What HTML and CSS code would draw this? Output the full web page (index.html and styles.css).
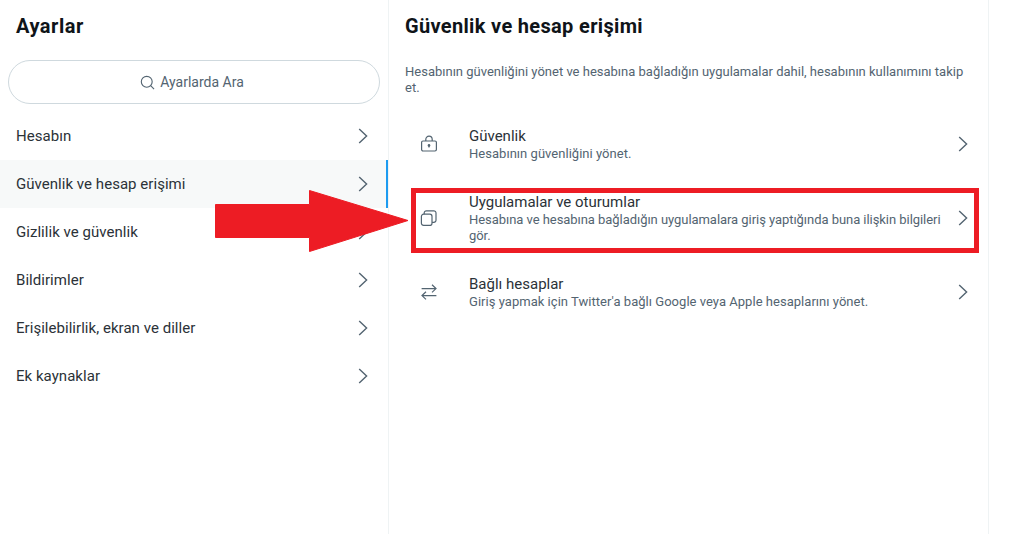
FILE: index.html
```html
<!DOCTYPE html>
<html lang="tr">
<head>
<meta charset="utf-8">
<title>Ayarlar</title>
<link rel="stylesheet" href="styles.css">
</head>
<body>
<div class="layout">
  <aside class="sidebar">
    <h1 class="page-title">Ayarlar</h1>
    <div class="search">
      <svg class="search-icon" viewBox="0 0 16 16"><circle cx="7.2" cy="7.2" r="5.8"/><path d="M11.4 11.4 15 15"/></svg>
      <span>Ayarlarda Ara</span>
    </div>
    <nav class="nav">
      <div class="nav-item"><span>Hesabın</span><svg class="chev" viewBox="0 0 10 16"><path d="M1.2 1 8.6 8 1.2 15"/></svg></div>
      <div class="nav-item active"><span>Güvenlik ve hesap erişimi</span><svg class="chev" viewBox="0 0 10 16"><path d="M1.2 1 8.6 8 1.2 15"/></svg></div>
      <div class="nav-item"><span>Gizlilik ve güvenlik</span><svg class="chev" viewBox="0 0 10 16"><path d="M1.2 1 8.6 8 1.2 15"/></svg></div>
      <div class="nav-item"><span>Bildirimler</span><svg class="chev" viewBox="0 0 10 16"><path d="M1.2 1 8.6 8 1.2 15"/></svg></div>
      <div class="nav-item"><span>Erişilebilirlik, ekran ve diller</span><svg class="chev" viewBox="0 0 10 16"><path d="M1.2 1 8.6 8 1.2 15"/></svg></div>
      <div class="nav-item"><span>Ek kaynaklar</span><svg class="chev" viewBox="0 0 10 16"><path d="M1.2 1 8.6 8 1.2 15"/></svg></div>
    </nav>
  </aside>
  <main class="content">
    <h2 class="content-title">Güvenlik ve hesap erişimi</h2>
    <p class="intro">Hesabının güvenliğini yönet ve hesabına bağladığın uygulamalar dahil, hesabının kullanımını takip et.</p>
    <div class="row">
      <svg class="row-icon" viewBox="0 0 18 18"><path d="M3 6h12a1.4 1.4 0 0 1 1.4 1.4v7.2A1.4 1.4 0 0 1 15 16H3a1.4 1.4 0 0 1-1.4-1.4V7.4A1.4 1.4 0 0 1 3 6Z"/><path d="M5.8 6V4.4a3.2 3.2 0 0 1 6.4 0V6"/><circle class="fill" cx="9" cy="10.4" r="1.3"/><path d="M9 11v1.6"/></svg>
      <div class="row-text">
        <div class="row-title">Güvenlik</div>
        <div class="row-sub">Hesabının güvenliğini yönet.</div>
      </div>
      <svg class="chev" viewBox="0 0 10 16"><path d="M1.2 1 8.6 8 1.2 15"/></svg>
    </div>
    <div class="row">
      <svg class="row-icon" viewBox="0 0 18 18"><rect x="1.4" y="5.2" width="10.6" height="11.2" rx="2.2"/><path d="M4.2 5.2V4a2.2 2.2 0 0 1 2.2-2.2h7.4A2.2 2.2 0 0 1 16 4v7.2a2.2 2.2 0 0 1-2.2 2.2H12"/></svg>
      <div class="row-text">
        <div class="row-title">Uygulamalar ve oturumlar</div>
        <div class="row-sub row-sub-tight">Hesabına ve hesabına bağladığın uygulamalara giriş yaptığında buna ilişkin bilgileri gör.</div>
      </div>
      <svg class="chev" viewBox="0 0 10 16"><path d="M1.2 1 8.6 8 1.2 15"/></svg>
    </div>
    <div class="row">
      <svg class="row-icon" viewBox="0 0 18 18"><path d="M1.6 5.6h14.4M12 1.8l4 3.8-4 3.8M16.4 12.6H2M6 8.8l-4 3.8 4 3.8"/></svg>
      <div class="row-text">
        <div class="row-title">Bağlı hesaplar</div>
        <div class="row-sub">Giriş yapmak için Twitter'a bağlı Google veya Apple hesaplarını yönet.</div>
      </div>
      <svg class="chev" viewBox="0 0 10 16"><path d="M1.2 1 8.6 8 1.2 15"/></svg>
    </div>
  </main>
  <div class="red-box"></div>
  <svg class="red-arrow" viewBox="0 0 195 64"><path d="M0.5 15.5H94.5V1.5L193 31.5 94.5 62.5V48.5H0.5Z"/></svg>
</div>
</body>
</html>
```
FILE: styles.css
```css
* { box-sizing: border-box; }
html, body { margin: 0; height: 100%; background: #fff; overflow: hidden; }
body { font-family: Roboto, "Liberation Sans", sans-serif; color: #0f1419; }
.layout { position: relative; display: flex; height: 534px; width: 989px; border-right: 1px solid #eff3f4; }
.sidebar { width: 389px; flex: none; border-right: 1px solid #eff3f4; }
.page-title { margin: 0; height: 53px; padding: 0 16px; font-size: 20px; line-height: 53px; font-weight: 700; letter-spacing: 0.5px; }
.search { margin: 7px 8px 8px; height: 44px; padding-right: 4px; border: 1px solid #cfd9de; border-radius: 22px; display: flex; align-items: center; justify-content: center; gap: 5px; font-size: 14px; color: #536471; }
.search-icon { width: 15px; height: 15px; fill: none; stroke: #536471; stroke-width: 1.2; }
.nav-item { height: 48px; padding: 0 16px; display: flex; align-items: center; justify-content: space-between; font-size: 15px; letter-spacing: 0.04px; color: #2b3238; }
.nav-item.active { background: #f7f9f9; border-right: 2px solid #1d9bf0; padding-right: 14px; }
.chev { width: 10px; height: 16px; flex: none; fill: none; stroke: #536471; stroke-width: 1.4; margin-right: 4px; }
.content { flex: 1; min-width: 0; }
.content-title { margin: 0; height: 53px; padding: 0 16px; font-size: 20px; line-height: 53px; font-weight: 700; letter-spacing: 0.33px; }
.intro { margin: 11px 0 0; padding: 0 16px; height: 47px; font-size: 13px; line-height: 16px; color: #536471; }
.row { display: flex; align-items: center; padding: 15px 16px; }
.row-icon { width: 18px; height: 18px; margin-left: 15px; flex: none; fill: none; stroke: #536471; stroke-width: 1.2; }
.row-icon .fill { fill: #536471; stroke: none; }
.row-text { flex: 1; min-width: 0; margin-left: 31px; padding-right: 6px; }
.row-title { font-size: 15px; line-height: 20px; color: #2b3238; }
.row-sub { font-size: 13px; line-height: 16px; letter-spacing: 0.03px; color: #536471; }
.row-sub-tight { letter-spacing: -0.05px; }
.red-box { position: absolute; left: 411px; top: 188px; width: 568px; height: 65px; border: 5px solid #ed1c24; }
.red-arrow { position: absolute; left: 215px; top: 189px; width: 195px; height: 64px; fill: #ed1c24; stroke: #ed1c24; stroke-width: 1; stroke-linejoin: round; }
```
